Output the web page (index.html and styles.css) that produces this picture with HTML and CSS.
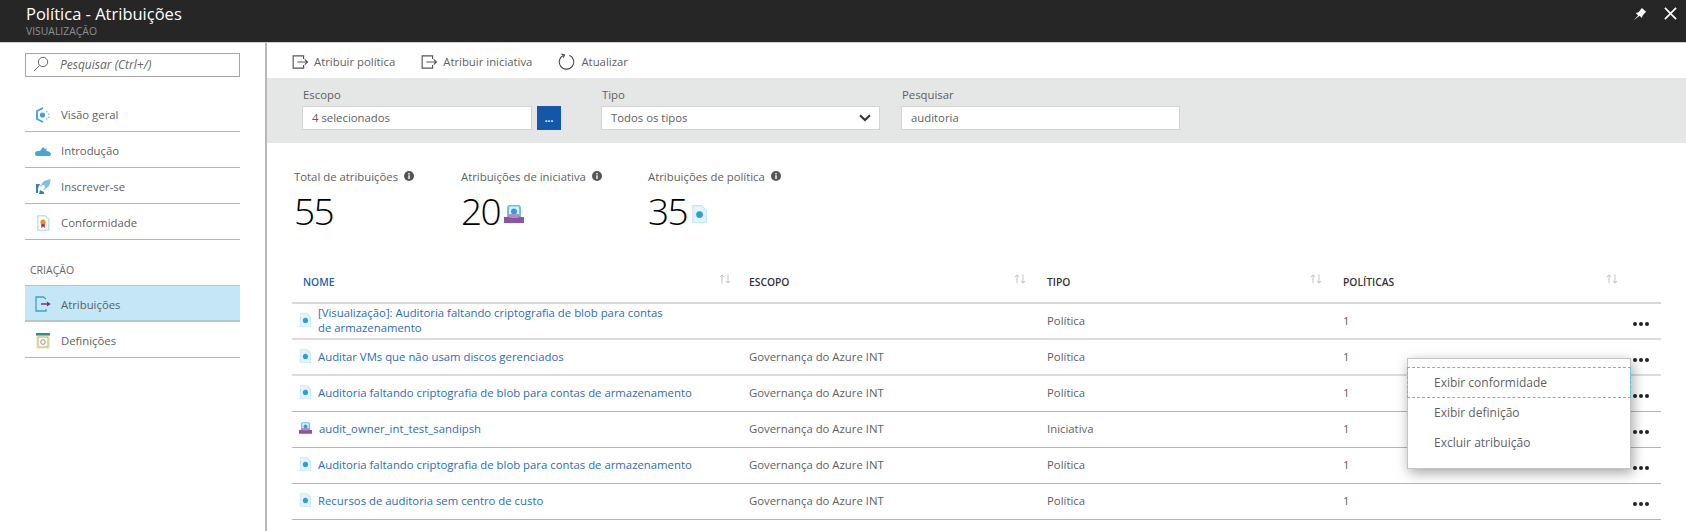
FILE: index.html
```html
<!DOCTYPE html>
<html lang="pt">
<head>
<meta charset="UTF-8">
<meta name="viewport" content="width=device-width, initial-scale=1.0">
<title>Política - Atribuições</title>
<link rel="stylesheet" href="styles.css">
</head>
<body>
<svg class="defs" width="0" height="0">
  <symbol id="doc" viewBox="0 0 14 16">
    <path d="M1 0h8.500l4.500 4.500V16H1z" fill="#c5e6f6"/>
    <path d="M2 1h7l4 4v10H2z" fill="#e3f4fc"/>
    <circle cx="7.500" cy="8.500" r="3" fill="#2f9fd6"/>
  </symbol>
  <symbol id="initiative" viewBox="0 0 20 18">
    <path d="M3 3q0-3 3-3h8q3 0 3 3v9H3z" fill="#6fc0e6"/>
    <path d="M5 3q0-1.500 1.500-1.500h7Q15 1.500 15 3v9H5z" fill="#d9f0fa"/>
    <circle cx="10" cy="6.500" r="3" fill="#2f9fd6"/>
    <path d="M0 12h4l2-3h8l2 3h4v6H0z" fill="#8b559f"/>
    <path d="M4 12 6 9h8l2 3-3 1H7z" fill="#b48cc4"/>
  </symbol>
  <symbol id="assign" viewBox="0 0 22 18">
    <path d="M15 5V1H1.500v16H15v-4" fill="none" stroke="#555" stroke-width="1.500"/>
    <path d="M7 9h13M16.500 5.500 20 9l-3.500 3.500" fill="none" stroke="#555" stroke-width="1.500"/>
  </symbol>
  <symbol id="info" viewBox="0 0 10 10">
    <circle cx="5" cy="5" r="5" fill="#555"/>
    <path d="M4.300 4.300h1.400V8H4.300zM4.300 2h1.400v1.400H4.300z" fill="#fff"/>
  </symbol>
  <symbol id="sort" viewBox="0 0 12 10">
    <path d="M3 9.500V1M1 3l2-2.200L5 3M9 .5V9M7 7l2 2.200L11 7" fill="none" stroke="#c4c4c4" stroke-width="1"/>
  </symbol>
</svg>

<header class="topbar">
  <div>
    <div class="topbar-title">Política - Atribuições</div>
    <div class="topbar-sub">VISUALIZAÇÃO</div>
  </div>
  <div class="topbar-actions">
    <svg width="14" height="14" viewBox="0 0 15 15"><path d="M.500 14.500 5.500 9 3 6.500l3-1L9.500 1l4.500 4-3.500 3.800-1 3L7 9.500z" fill="#fff"/></svg>
    <svg width="13" height="13" viewBox="0 0 14 14"><path d="M1 1l12 12M13 1 1 13" stroke="#fff" stroke-width="1.800"/></svg>
  </div>
</header>

<div class="blade">
  <nav class="sidebar">
    <div class="side-search">
      <svg width="16" height="16" viewBox="0 0 16 16"><circle cx="10" cy="6" r="4.700" fill="none" stroke="#666"/><path d="M6.500 9.500 1 15" stroke="#666"/></svg>
      <span>Pesquisar (Ctrl+/)</span>
    </div>
    <ul class="menu-list">
      <li class="side-item">
        <svg width="16" height="16" viewBox="0 0 16 16"><path d="M8 1 2 4v8l6 3" fill="none" stroke="#3f9fd4" stroke-width="1.800"/><circle cx="7.500" cy="8" r="2.600" fill="#3f9fd4"/><path d="M11 4h1.500v1.500H11zM13 6.500h1.500V8H13zM13 9.500h1.500V11H13zM11 11h1.500v1.500H11z" fill="#8cc8e8"/></svg>
        Visão geral
      </li>
      <li class="side-item">
        <svg width="16" height="16" viewBox="0 0 16 16"><path d="M0 11q0-3 3-3 1-.500 2 0l3-4 2 2 2-.500L11 8q4 0 5 3 0 2-2 2H2q-2 0-2-2z" fill="#47a6d8"/></svg>
        Introdução
      </li>
      <li class="side-item">
        <svg width="16" height="16" viewBox="0 0 16 16"><path d="M16 0l-7 2-4 5 4 4 5-4z" fill="#7cc0e4"/><path d="M1 5h4L3 9v5H1zM5 11l4 2v2H4z" fill="#2f84b8"/><circle cx="8" cy="8" r="2" fill="#fff"/></svg>
        Inscrever-se
      </li>
      <li class="side-item">
        <svg width="16" height="16" viewBox="0 0 14 16"><path d="M1 0h8.500l4 4v12H1z" fill="#bfe3f5"/><path d="M2.500 1.500h6.500l3 3V14.500H2.500z" fill="#fff"/><circle cx="7" cy="7" r="2.600" fill="#f08a24"/><path d="M5.300 9h3.400v4L7 11.500 5.300 13z" fill="#c8242f"/></svg>
        Conformidade
      </li>
    </ul>
    <div class="side-group">CRIAÇÃO</div>
    <ul class="menu-list">
      <li class="side-item side-item-active">
        <svg width="16" height="16" viewBox="0 0 16 16"><path d="M11 3 8.500 1H1v14h10v-2" fill="none" stroke="#3f9fd4" stroke-width="1.300"/><path d="M6 8h9" stroke="#7b2f92" stroke-width="1.500"/><path d="M12 5.500 15.500 8 12 10.500z" fill="#7b2f92"/></svg>
        Atribuições
      </li>
      <li class="side-item">
        <svg width="16" height="16" viewBox="0 0 16 16"><path d="M1 2h14v14H1z" fill="#f3eed2"/><path d="M1 0h14v2.500H1z" fill="#2f8f8f"/><path d="M3 4h10v10H3z" fill="#fbf8e6" stroke="#bcb58c"/><circle cx="8" cy="9" r="2.300" fill="none" stroke="#999"/></svg>
        Definições
      </li>
    </ul>
  </nav>

  <main class="content">
    <div class="toolbar">
      <span class="tool"><svg width="17" height="14"><use href="#assign"/></svg>Atribuir política</span>
      <span class="tool"><svg width="17" height="14"><use href="#assign"/></svg>Atribuir iniciativa</span>
      <span class="tool tool-refresh">
        <svg width="17" height="17" viewBox="0 0 18 18"><path d="M6 2.300a7.700 7.700 0 1 0 6 0" fill="none" stroke="#444" stroke-width="1.100"/><path d="M3.500 1 7 2l-1.500 3" fill="none" stroke="#444" stroke-width="1.100"/></svg>
        Atualizar
      </span>
    </div>

    <section class="filters">
      <div class="field field-scope">
        <label>Escopo</label>
        <div class="field-row">
          <div class="input input-scope">4 selecionados</div>
          <div class="pick-btn">...</div>
        </div>
      </div>
      <div class="field field-type">
        <label>Tipo</label>
        <div class="input input-select">
          Todos os tipos
          <svg width="12" height="8" viewBox="0 0 12 8"><path d="M1 1.200 6 6l5-4.800" fill="none" stroke="#333" stroke-width="2"/></svg>
        </div>
      </div>
      <div class="field field-search">
        <label>Pesquisar</label>
        <div class="input input-search">auditoria</div>
      </div>
    </section>

    <section class="stats">
      <div class="stat stat-total">
        <div class="stat-label">Total de atribuições <svg width="10" height="10"><use href="#info"/></svg></div>
        <div class="stat-value">55</div>
      </div>
      <div class="stat stat-initiative">
        <div class="stat-label">Atribuições de iniciativa <svg width="10" height="10"><use href="#info"/></svg></div>
        <div class="stat-value">20<svg width="20" height="18"><use href="#initiative"/></svg></div>
      </div>
      <div class="stat">
        <div class="stat-label">Atribuições de política <svg width="10" height="10"><use href="#info"/></svg></div>
        <div class="stat-value">35<svg width="16" height="18"><use href="#doc"/></svg></div>
      </div>
    </section>

    <table class="grid">
      <thead>
        <tr>
          <th class="col-name sorted"><div class="th-inner">NOME<svg width="12" height="10"><use href="#sort"/></svg></div></th>
          <th class="col-scope"><div class="th-inner">ESCOPO<svg width="12" height="10"><use href="#sort"/></svg></div></th>
          <th class="col-type"><div class="th-inner">TIPO<svg width="12" height="10"><use href="#sort"/></svg></div></th>
          <th class="col-policies"><div class="th-inner">POLÍTICAS<svg width="12" height="10"><use href="#sort"/></svg></div></th>
          <th class="col-more"></th>
        </tr>
      </thead>
      <tbody>
        <tr>
          <td><a class="name-link"><svg width="12" height="14"><use href="#doc"/></svg><span>[Visualização]: Auditoria faltando criptografia de blob para contas<br>de armazenamento</span></a></td>
          <td></td>
          <td>Política</td>
          <td>1</td>
          <td class="more"><i></i><i></i><i></i></td>
        </tr>
        <tr>
          <td><a class="name-link"><svg width="12" height="14"><use href="#doc"/></svg><span>Auditar VMs que não usam discos gerenciados</span></a></td>
          <td>Governança do Azure INT</td>
          <td>Política</td>
          <td>1</td>
          <td class="more"><i></i><i></i><i></i></td>
        </tr>
        <tr>
          <td><a class="name-link"><svg width="12" height="14"><use href="#doc"/></svg><span>Auditoria faltando criptografia de blob para contas de armazenamento</span></a></td>
          <td>Governança do Azure INT</td>
          <td>Política</td>
          <td>1</td>
          <td class="more"><i></i><i></i><i></i></td>
        </tr>
        <tr>
          <td><a class="name-link"><svg width="13" height="14"><use href="#initiative"/></svg><span>audit_owner_int_test_sandipsh</span></a></td>
          <td>Governança do Azure INT</td>
          <td>Iniciativa</td>
          <td>1</td>
          <td class="more"><i></i><i></i><i></i></td>
        </tr>
        <tr>
          <td><a class="name-link"><svg width="12" height="14"><use href="#doc"/></svg><span>Auditoria faltando criptografia de blob para contas de armazenamento</span></a></td>
          <td>Governança do Azure INT</td>
          <td>Política</td>
          <td>1</td>
          <td class="more"><i></i><i></i><i></i></td>
        </tr>
        <tr>
          <td><a class="name-link"><svg width="12" height="14"><use href="#doc"/></svg><span>Recursos de auditoria sem centro de custo</span></a></td>
          <td>Governança do Azure INT</td>
          <td>Política</td>
          <td>1</td>
          <td class="more"><i></i><i></i><i></i></td>
        </tr>
      </tbody>
    </table>

    <div class="context-menu">
      <div class="context-item context-item-focus">Exibir conformidade</div>
      <div class="context-item">Exibir definição</div>
      <div class="context-item">Excluir atribuição</div>
    </div>
  </main>
</div>
</body>
</html>
```

FILE: styles.css
```css
* {
  box-sizing: border-box;
}
html,
body {
  height: 100%;
}
body {
  margin: 0;
  font-family: "Open Sans", "Noto Sans", sans-serif;
  font-size: 11.35px;
  color: #5f5f5f;
  background: #fff;
  overflow: hidden;
  display: flex;
  flex-direction: column;
}
.defs {
  position: absolute;
}
svg {
  flex: none;
}

/* barra superior */
.topbar {
  height: 43px;
  flex: none;
  background: #262626;
  border-bottom: 1px solid #cfcfcf;
  display: flex;
  justify-content: space-between;
  padding: 2px 9px 0 26px;
}
.topbar-title {
  font-size: 16.5px;
  line-height: 23px;
  color: #fff;
}
.topbar-sub {
  font-size: 10.4px;
  line-height: 12px;
  color: #8f8f8f;
}
.topbar-actions {
  display: flex;
  gap: 17px;
  padding-top: 5px;
}

.blade {
  flex: 1;
  display: flex;
  min-height: 0;
}

/* menu lateral */
.sidebar {
  width: 267px;
  flex: none;
  border-right: 2px solid #b8b8b8;
  padding: 10px 25px 0;
}
.side-search {
  height: 24px;
  border: 1px solid #a6a6a6;
  display: flex;
  align-items: center;
  gap: 11px;
  padding: 0 0 2px 7px;
  font-size: 12px;
  font-style: italic;
  color: #666;
  margin-bottom: 19px;
}
.menu-list {
  list-style: none;
  margin: 0;
  padding: 0;
}
.side-item {
  height: 36px;
  display: flex;
  align-items: center;
  gap: 10px;
  padding: 2px 0 0 10px;
  border-bottom: 1px solid #b5b5b5;
}
.side-item-active {
  height: 37px;
  background: #c4e7f7;
  border-top: 1px solid #b5c5cc;
  border-bottom: 2px solid #b5c5cc;
}
.side-group {
  font-size: 10.5px;
  line-height: 14px;
  color: #666;
  padding: 23px 0 8px 5px;
}

/* conteudo */
.content {
  flex: 1;
  min-width: 0;
  position: relative;
}
.toolbar {
  height: 35px;
  display: flex;
  align-items: center;
  padding: 2px 0 0 25px;
  gap: 26px;
}
.tool {
  display: flex;
  align-items: center;
  gap: 5px;
}
.tool-refresh {
  gap: 6px;
}
.filters {
  height: 65px;
  background: #e5e6e6;
  display: flex;
  padding: 9px 0 0 35px;
}
.field label {
  display: block;
  line-height: 16px;
  margin-bottom: 3px;
  padding-left: 1px;
}
.field-row {
  display: flex;
  gap: 5px;
}
.field-scope {
  width: 299px;
}
.field-type {
  width: 300px;
}
.input {
  height: 24px;
  background: #fff;
  border: 1px solid #d4d4d4;
  line-height: 22px;
  padding-left: 9px;
}
.input-scope {
  width: 230px;
}
.pick-btn {
  width: 24px;
  height: 24px;
  background: #1257a8;
  color: #fff;
  font-size: 10px;
  font-weight: 700;
  line-height: 24px;
  text-align: center;
}
.input-select {
  width: 279px;
  display: flex;
  justify-content: space-between;
  align-items: center;
  padding-right: 8px;
}
.input-search {
  width: 279px;
}

.stats {
  display: flex;
  padding: 25px 0 0 27px;
}
.stat-total {
  width: 167px;
}
.stat-initiative {
  width: 187px;
}
.stat-label {
  line-height: 18px;
}
.stat-label svg {
  margin-left: 3px;
}
.stat-value {
  font-size: 37px;
  font-weight: 300;
  letter-spacing: -1.5px;
  line-height: 50px;
  color: #000;
  display: flex;
  align-items: flex-end;
  gap: 4px;
}
.stat-value svg {
  margin-bottom: 13px;
}

/* tabela */
.grid {
  width: 1369px;
  margin: 28px 0 0 25px;
  border-collapse: collapse;
  table-layout: fixed;
}
.grid th {
  height: 39px;
  padding: 0 10px 3px 11px;
  text-align: left;
  font-size: 10.3px;
  font-weight: 600;
  color: #333;
  border-bottom: 2px solid #d8d8d8;
}
.th-inner {
  display: flex;
  justify-content: space-between;
  align-items: center;
}
.th-inner svg {
  margin-top: -6px;
}
.grid th.sorted {
  color: #1f5fae;
  padding-right: 7px;
}
.grid th.col-policies {
  padding-right: 0;
}
.col-name {
  width: 446px;
}
.col-scope {
  width: 298px;
}
.col-type {
  width: 296px;
}
.col-policies {
  width: 286px;
}
.grid td {
  height: 36px;
  padding: 0 5px 2px 11px;
  border-bottom: 1px solid #b5b5b5;
  line-height: 15px;
  vertical-align: middle;
}
.grid tbody tr:nth-child(-n+2) td {
  border-bottom: 2px solid #dcdcdc;
}
.name-link {
  display: flex;
  align-items: center;
  gap: 7px;
  margin-left: -1px;
  color: #2e6db4;
}
.name-link svg {
  margin-left: -3px;
}
.more {
  white-space: nowrap;
}
.grid td.more {
  padding: 1px 0 0 15px;
}
.more i {
  display: inline-block;
  width: 4px;
  height: 4px;
  margin-right: 2px;
  border-radius: 50%;
  background: #222;
}

/* menu de contexto */
.context-menu {
  position: absolute;
  left: 1140px;
  top: 315px;
  width: 224px;
  height: 111px;
  background: #fff;
  border: 1px solid #c4c4c4;
  box-shadow: 2px 4px 12px rgba(0, 0, 0, 0.35);
  padding-top: 8px;
  font-size: 12px;
}
.context-item {
  height: 29.5px;
  line-height: 29.5px;
  padding-left: 26px;
}
.context-item-focus {
  height: 31px;
  margin: 0 -1px;
  border: 1px dashed #4fc3e8;
  padding-left: 26px;
}
```
